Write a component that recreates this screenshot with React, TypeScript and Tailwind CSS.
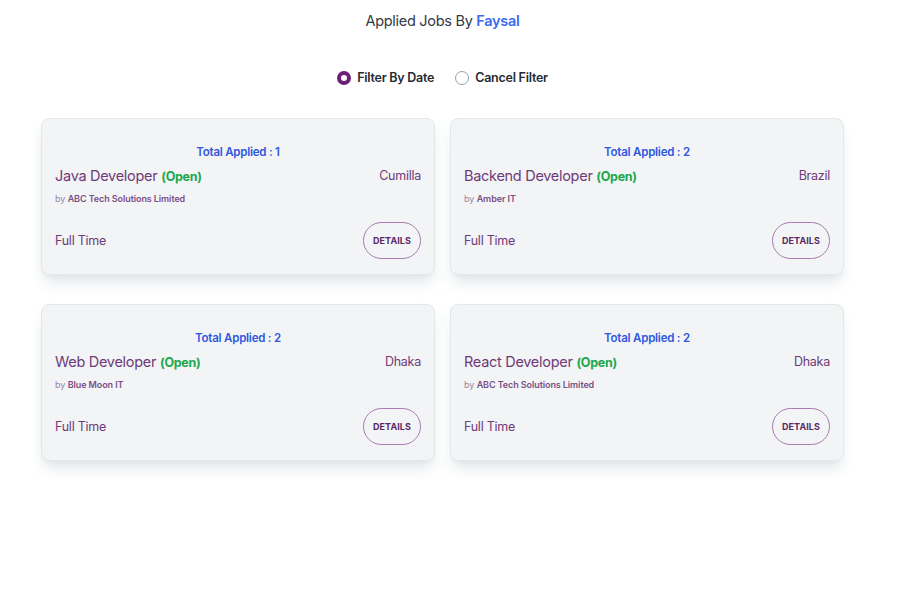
const jobs = [
  { title: 'Java Developer', company: 'ABC Tech Solutions Limited', location: 'Cumilla', total: 1 },
  { title: 'Backend Developer', company: 'Amber IT', location: 'Brazil', total: 2 },
  { title: 'Web Developer', company: 'Blue Moon IT', location: 'Dhaka', total: 2 },
  { title: 'React Developer', company: 'ABC Tech Solutions Limited', location: 'Dhaka', total: 2 },
]

function JobCard({ job }: { job: (typeof jobs)[number] }) {
  return (
    <div className="h-[157px] rounded-lg border border-gray-200 bg-[#f3f4f6] px-[13px] pt-[25px] shadow-lg shadow-gray-300/60">
      <p className="text-center text-[11.5px] font-semibold leading-4 tracking-[-0.02em] text-[#2f58e0]">
        Total Applied : {job.total}
      </p>
      <div className="mt-[6px] flex items-start justify-between">
        <h2 className="text-[14.5px] leading-5 tracking-[-0.02em] text-[#6e3a78]">
          {job.title} <span className="text-[12.5px] font-bold text-[#1ea84e]">(Open)</span>
        </h2>
        <span className="text-[12.5px] leading-5 tracking-[-0.02em] text-[#6e3a78]">{job.location}</span>
      </div>
      <p className="mt-[4px] text-[9px] leading-4 tracking-[-0.01em] text-[#9a85a0]">
        by <span className="font-semibold text-[#7a4f84]">{job.company}</span>
      </p>
      <div className="mt-[15px] flex items-center justify-between">
        <span className="pt-[2px] text-[12.5px] tracking-[-0.02em] text-[#6e3a78]">Full Time</span>
        <button
          type="button"
          className="h-[37px] w-[58px] rounded-full border border-[#a77bb0] text-[9px] font-bold tracking-[0.01em] text-[#5b2a66]"
        >
          DETAILS
        </button>
      </div>
    </div>
  )
}

export default function App() {
  return (
    <div
      className="min-h-[600px] w-[885px] bg-white pt-[11px]"
      style={{ fontFamily: 'Inter, "Noto Sans", sans-serif' }}
    >
      <h1 className="text-center text-[14.5px] leading-5 tracking-[-0.02em] text-[#333844]">
        Applied Jobs By <span className="font-semibold text-[#3b6cf0]">Faysal</span>
      </h1>
      <div className="mt-[38px] flex items-center justify-center gap-[21px] text-[12.5px] font-semibold tracking-[-0.02em] text-[#262a33]">
        <label className="flex items-center gap-[6px]">
          <span className="size-[14px] rounded-full border-[4px] border-[#6b1f7a] bg-white" />
          Filter By Date
        </label>
        <label className="flex items-center gap-[6px]">
          <span className="size-[14px] rounded-full border border-gray-400 bg-white" />
          Cancel Filter
        </label>
      </div>
      <div className="mx-auto mt-[30px] grid w-[803px] grid-cols-2 gap-x-[15px] gap-y-[29px]">
        {jobs.map((job) => (
          <JobCard key={job.title} job={job} />
        ))}
      </div>
    </div>
  )
}
